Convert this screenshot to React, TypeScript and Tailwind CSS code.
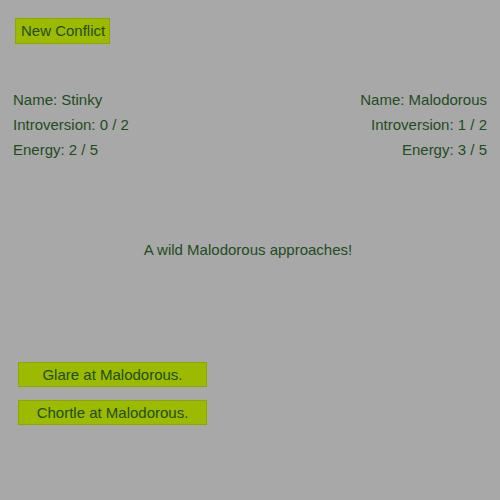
export default function App() {
  const left = ['Name: Stinky', 'Introversion: 0 / 2', 'Energy: 2 / 5'];
  const right = ['Name: Malodorous', 'Introversion: 1 / 2', 'Energy: 3 / 5'];

  return (
    <div className="w-[500px] h-[500px] bg-[#a8a8a8] text-[#1e4d1e] text-[15px] leading-[25px] font-['Liberation_Sans',Arial,sans-serif] flex flex-col">
      <div className="pt-[18px] pl-[15px]">
        <button className="h-[26px] pl-[5px] pr-[4px] bg-[#9bba00] border border-[#8aa800] leading-[24px]">
          New Conflict
        </button>
      </div>

      {/* Combatants */}
      <div className="mt-[43px] px-[13px] flex justify-between">
        <div className="flex flex-col">
          {left.map((t) => (
            <div key={t}>{t}</div>
          ))}
        </div>
        <div className="flex flex-col items-end">
          {right.map((t) => (
            <div key={t}>{t}</div>
          ))}
        </div>
      </div>

      <div className="mt-[75px] pr-[4px] text-center">A wild Malodorous approaches!</div>

      {/* Actions */}
      <div className="mt-[100px] pl-[18px] flex flex-col gap-[13px]">
        <button className="w-[189px] h-[25px] bg-[#9bba00] border border-[#8aa800] leading-[23px]">
          Glare at Malodorous.
        </button>
        <button className="w-[189px] h-[25px] bg-[#9bba00] border border-[#8aa800] leading-[23px]">
          Chortle at Malodorous.
        </button>
      </div>
    </div>
  );
}
